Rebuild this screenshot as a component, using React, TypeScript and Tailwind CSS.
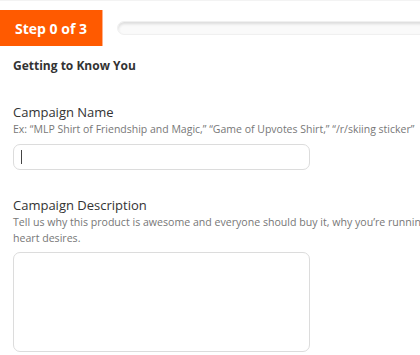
export default function App() {
  return (
    <div className="w-[420px] h-[355px] overflow-hidden bg-white border-t border-[#f3f3f3]" style={{ fontFamily: '"Open Sans", sans-serif' }}>
      <div className="flex items-center mt-[9px] h-[36px]">
        <div className="h-[36px] w-[103px] shrink-0 bg-[#ff5a00] border-r border-[#ffb08a] flex items-center justify-center text-white font-bold text-[14px]">
          Step 0 of 3
        </div>
        <div className="ml-[14px] h-[14px] w-[400px] shrink-0 rounded-full bg-[#fafafa] shadow-[inset_0_2px_3px_rgba(0,0,0,0.12)] border border-[#f0f0f0]"></div>
      </div>
      <div className="px-[13px]">
        <div className="mt-[12px] text-[12px] font-bold text-[#333] leading-[16px]">Getting to Know You</div>
        <div className="mt-[29px] text-[13px] text-[#333] leading-[18px]">Campaign Name</div>
        <div className="text-[10.5px] text-[#777] leading-[16px] whitespace-nowrap">
          Ex: “MLP Shirt of Friendship and Magic,” “Game of Upvotes Shirt,” “/r/skiing sticker”
        </div>
        <div className="mt-[7px] w-[297px] h-[26px] rounded-[7px] border border-[#dcdcdc] flex items-center pl-[7px]">
          <div className="w-px h-[14px] bg-[#444]"></div>
        </div>
        <div className="mt-[26px] text-[13px] text-[#333] leading-[18px]">Campaign Description</div>
        <div className="text-[10.6px] text-[#777] leading-[16px] whitespace-nowrap">
          Tell us why this product is awesome and everyone should buy it, why you’re running this campaign, or whatever your
          <br />
          heart desires.
        </div>
        <div className="mt-[6px] w-[297px] h-[100px] rounded-[7px] border border-[#dcdcdc]"></div>
      </div>
    </div>
  );
}
